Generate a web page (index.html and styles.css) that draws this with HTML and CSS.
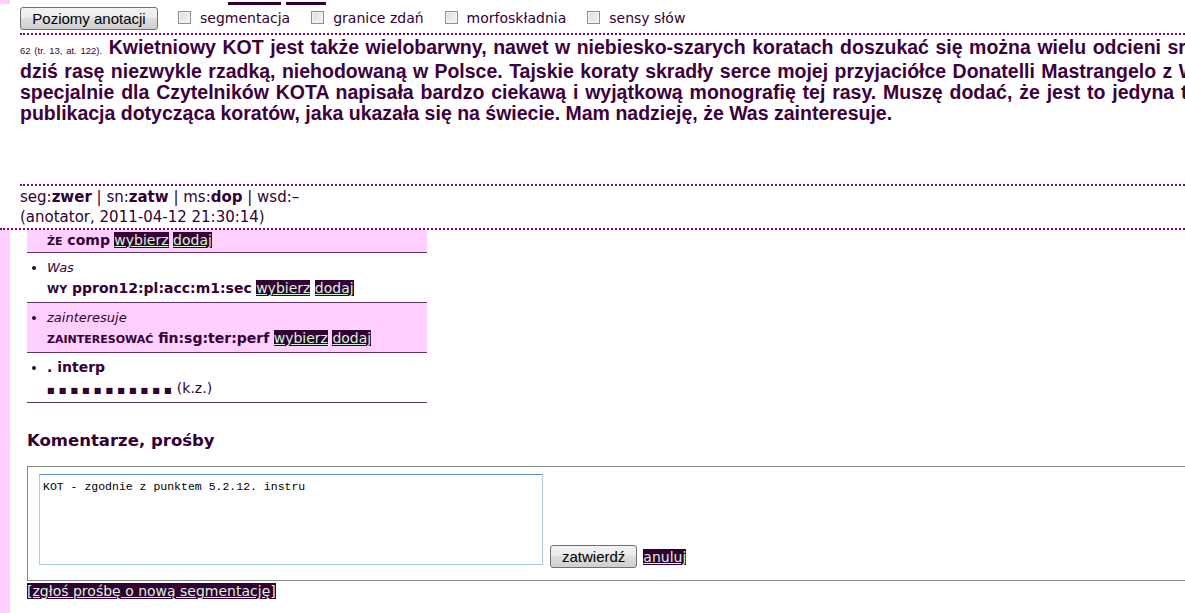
FILE: index.html
```html
<!DOCTYPE html>
<html lang="pl">
<head>
    <meta charset="UTF-8">
    <title>Anotacja fragmentu</title>
    <link rel="stylesheet" href="styles.css">
</head>
<body>

    <!-- Fragment strony widoczny nad panelem -->
    <div class="peek">
        <span class="peek-side"></span>
        <span class="peek-bar peek-bar-wide"></span>
        <span class="peek-bar"></span>
    </div>

    <!-- Panel z tekstem fragmentu -->
    <div class="panel">
        <div class="toolbar">
            <button class="btn">Poziomy anotacji</button>
            <label class="layer"><input type="checkbox"> segmentacja</label>
            <label class="layer"><input type="checkbox"> granice zdań</label>
            <label class="layer"><input type="checkbox"> morfoskładnia</label>
            <label class="layer"><input type="checkbox"> sensy słów</label>
        </div>

        <div class="fragment-box">
            <p class="fragment"><span class="ref">62 (tr. 13, at. 122).</span> Kwietniowy KOT jest także wielobarwny, nawet w niebiesko-szarych koratach doszukać się można wielu odcieni srebra. Przedstawiamy dziś rasę niezwykle rzadką, niehodowaną w Polsce. Tajskie koraty skradły serce mojej przyjaciółce Donatelli Mastrangelo z Włoch, która ponadto specjalnie dla Czytelników KOTA napisała bardzo ciekawą i wyjątkową monografię tej rasy. Muszę dodać, że jest to jedyna taka nowa książkowa publikacja dotycząca koratów, jaka ukazała się na świecie. Mam nadzieję, że Was zainteresuje.</p>
        </div>

        <div class="status">
            <div>seg:<b>zwer</b> | sn:<b>zatw</b> | ms:<b>dop</b> | wsd:–</div>
            <div>(anotator, 2011-04-12 21:30:14)</div>
        </div>
    </div>

    <div class="page">
        <div class="side"></div>
        <div class="content">
            <ul class="tokens">
                <li class="tok tok-odd tok-cut">
                    <b><span class="lemma">że</span> comp</b>
                    <a href="#" class="act">wybierz</a> <a href="#" class="act">dodaj</a>
                </li>
                <li class="tok">
                    <div class="tok-body">
                        <i>Was</i><br>
                        <b><span class="lemma">wy</span> ppron12:pl:acc:m1:sec</b>
                        <a href="#" class="act">wybierz</a> <a href="#" class="act">dodaj</a>
                    </div>
                </li>
                <li class="tok tok-odd">
                    <div class="tok-body">
                        <i>zainteresuje</i><br>
                        <b><span class="lemma">zainteresować</span> fin:sg:ter:perf</b>
                        <a href="#" class="act">wybierz</a> <a href="#" class="act">dodaj</a>
                    </div>
                </li>
                <li class="tok">
                    <div class="tok-body">
                        <b>. interp</b><br>
                        <span class="dots">■ ■ ■ ■ ■ ■ ■ ■ ■ ■ ■</span> (k.z.)
                    </div>
                </li>
            </ul>

            <h3 class="comments-title">Komentarze, prośby</h3>

            <div class="comment-box">
                <textarea class="comment-text">KOT - zgodnie z punktem 5.2.12. instru</textarea>
                <button class="btn btn-small">zatwierdź</button>
                <a href="#" class="act">anuluj</a>
            </div>

            <a href="#" class="act">[zgłoś prośbę o nową segmentację]</a>
        </div>
    </div>

</body>
</html>
```

FILE: styles.css
```css
html, body {
    overflow: hidden;
}

body {
    margin: 0;
    background-color: white;
    font-family: "DejaVu Sans", Verdana, sans-serif;
    color: #330033;
    width: 1420px;
}

/* pasek nad panelem */
.peek {
    display: flex;
    height: 5px;
}

.peek-side {
    width: 10px;
    height: 4px;
    background-color: #ffd0ff;
}

.peek-bar {
    width: 40px;
    height: 3px;
    margin-top: 2px;
    margin-left: 5px;
    background-color: #330033;
}

.peek-bar-wide {
    width: 53px;
    margin-left: 218px;
}

/* panel z fragmentem */
.panel {
    padding-left: 20px;
    border-bottom: 2px dotted #800080;
    height: 225px;
    box-sizing: border-box;
}

.toolbar {
    display: flex;
    align-items: center;
    height: 30px;
    padding-bottom: 2px;
    border-bottom: 2px dotted #800080;
    box-sizing: border-box;
    font-size: 14px;
}

.btn {
    font-family: "Liberation Sans", Arial, sans-serif;
    font-size: 15px;
    color: black;
    height: 23px;
    padding: 0 11px;
    border: 1px solid #707070;
    border-radius: 3px;
    background: linear-gradient(#f3f3f3, #ebebeb 45%, #dddddd 50%, #cfcfcf);
}

.toolbar .btn {
    width: 138px;
    margin-right: 20px;
}

.layer {
    display: flex;
    align-items: center;
    margin-right: 21px;
}

.layer input {
    appearance: none;
    width: 13px;
    height: 13px;
    margin: 0 9px 1px 0;
    border: 1px solid #8e8f8f;
    background: linear-gradient(135deg, #dcdcdc, #f6f6f6);
    box-shadow: inset 0 0 0 1px #f4f4f4;
}

.fragment-box {
    height: 147px;
    border-bottom: 2px dotted #800080;
}

.fragment {
    width: 1360px;
    margin: 2px 0 0;
    font-family: "Liberation Sans", Arial, sans-serif;
    font-weight: bold;
    font-size: 19.5px;
    line-height: 21px;
    text-align: justify;
    color: #3d003d;
}

.ref {
    font-weight: normal;
    font-size: 9.5px;
}

.status {
    padding-top: 1px;
    font-size: 15px;
    line-height: 20px;
}

/* lista segmentów */
.page {
    display: flex;
    min-height: 400px;
}

.side {
    width: 10px;
    background-color: #ffd0ff;
}

.content {
    flex: 1;
    padding-left: 17px;
}

.tokens {
    width: 400px;
    margin: 0;
    padding: 0;
    list-style: none;
    font-size: 14px;
    line-height: 21px;
}

.tok {
    padding: 4px 0 3px 20px;
    border-bottom: 1px solid #663366;
}

.tok-body {
    display: list-item;
    list-style: disc outside;
}

.tok-odd {
    background-color: #ffd0ff;
}

.tok-cut {
    padding: 0 0 1px 20px;
}

.tok i {
    font-size: 13px;
    line-height: 1;
}

.lemma {
    text-transform: uppercase;
    font-size: 11px;
    line-height: 1;
}

.dots {
    font-size: 8px;
    line-height: 1;
    letter-spacing: 0.8px;
}

.act {
    background-color: #330033;
    color: #d4f5d8;
}

.comments-title {
    margin: 28px 0 16px;
    font-size: 16.5px;
}

.comment-box {
    display: flex;
    align-items: flex-end;
    border: 1px solid #888888;
    padding: 7px 11px 15px;
    font-size: 14px;
}

.comment-text {
    width: 504px;
    height: 91px;
    margin: 0;
    box-sizing: border-box;
    padding: 5px 3px;
    resize: none;
    border: 1px solid #a9cce3;
    border-top-color: #5d8cc9;
    font-family: "Liberation Mono", "Courier New", monospace;
    font-size: 11.5px;
    color: black;
}

.btn-small {
    margin: 0 6px -3px 7px;
}

.content > .act {
    font-size: 14px;
}
```
